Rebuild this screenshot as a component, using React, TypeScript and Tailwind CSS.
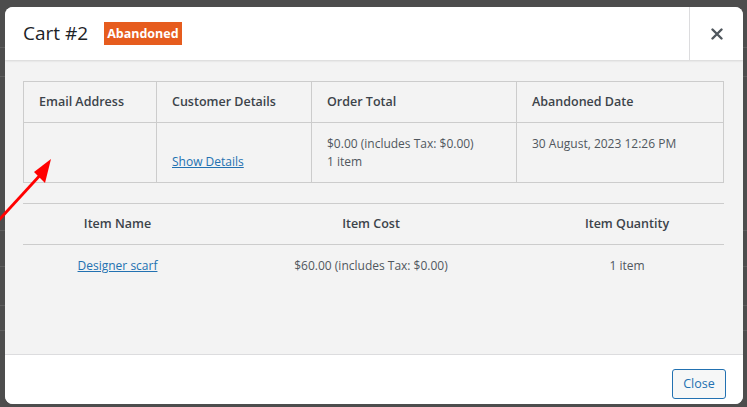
import React from "react";

export default function App() {
  const th = "text-left font-semibold text-[12.5px] text-[#3c434a] px-[15px] h-[41px] border border-[#cccccc]";
  const td = "align-top px-[15px] pt-[12px] pb-[10px] text-[12px] leading-[18px] text-[#50575e] border border-[#cccccc]";
  const th2 = "text-center font-semibold text-[12.5px] text-[#3c434a]";
  return (
    <div
      className="relative w-[747px] h-[407px] overflow-hidden bg-[#4d4d4d] pt-[7px] pl-[5px] pr-[4px] pb-[3px]"
      style={{ fontFamily: '"Open Sans", "Noto Sans", sans-serif' }}
    >
      {/* faint background page lines */}
      <div className="absolute left-0 top-[47px] w-full h-px bg-[#5e5e5e]" />
      <div className="absolute left-0 top-[76px] w-full h-px bg-[#5e5e5e]" />
      <div className="absolute left-0 top-[230px] w-full h-px bg-[#5e5e5e]" />
      <div className="absolute left-0 top-[266px] w-full h-px bg-[#5e5e5e]" />
      <div className="absolute left-0 top-[305px] w-full h-px bg-[#5e5e5e]" />
      <div className="absolute left-0 top-[330px] w-full h-px bg-[#5e5e5e]" />

      <div className="relative flex flex-col w-[738px] h-[397px] bg-white rounded-[8px] overflow-hidden">
        {/* header */}
        <div className="flex items-stretch h-[53px] shrink-0 shadow-[0_1px_2px_rgba(0,0,0,0.12)] z-10 bg-white">
          <div className="flex-1 flex items-center pl-[18px]">
            <span className="text-[19px] text-[#1d2327]">Cart #2</span>
            <span className="ml-[16px] bg-[#e65c1e] text-white font-bold text-[12.5px] leading-[23px] px-[3px]">
              Abandoned
            </span>
          </div>
          <div className="w-[54px] border-l border-[#dcdcde] flex items-center justify-center">
            <svg width="12" height="12" viewBox="0 0 12 12">
              <path d="M1.5 1.5 L10.5 10.5 M10.5 1.5 L1.5 10.5" stroke="#50575e" strokeWidth="2.4" strokeLinecap="round" />
            </svg>
          </div>
        </div>

        {/* body */}
        <div className="flex-1 bg-[#f3f3f3] pl-[18px] pr-[19px] pt-[21px]">
          <table className="w-[701px] border-collapse">
            <thead>
              <tr>
                <th className={th + " w-[133px]"}>Email Address</th>
                <th className={th + " w-[155px]"}>Customer Details</th>
                <th className={th + " w-[205px]"}>Order Total</th>
                <th className={th}>Abandoned Date</th>
              </tr>
            </thead>
            <tbody>
              <tr className="h-[60px]">
                <td className={td}></td>
                <td className={td}>
                  <div className="h-[18px]" />
                  <a className="text-[#2271b1] underline">Show Details</a>
                </td>
                <td className={td}>
                  <div>$0.00 (includes Tax: $0.00)</div>
                  <div>1 item</div>
                </td>
                <td className={td}>30 August, 2023 12:26 PM</td>
              </tr>
            </tbody>
          </table>

          <table className="w-[701px] border-collapse mt-[20px]">
            <thead>
              <tr className="h-[41px] border-t border-b border-[#cccccc]">
                <th className={th2 + " w-[189px]"}>Item Name</th>
                <th className={th2 + " w-[318px]"}>Item Cost</th>
                <th className={th2}>Item Quantity</th>
              </tr>
            </thead>
            <tbody>
              <tr className="h-[42px]">
                <td className="text-center text-[12px] text-[#2271b1]">
                  <a className="underline">Designer scarf</a>
                </td>
                <td className="text-center text-[12px] text-[#50575e]">$60.00 (includes Tax: $0.00)</td>
                <td className="text-center text-[12px] text-[#50575e]">1 item</td>
              </tr>
            </tbody>
          </table>
        </div>

        {/* footer */}
        <div className="h-[50px] shrink-0 border-t border-[#dcdcde] flex items-start justify-end pt-[14px] pr-[17px] bg-white">
          <button className="h-[30px] w-[54px] border border-[#2271b1] rounded-[3px] bg-[#f6f7f7] text-[#2271b1] text-[12.5px]">
            Close
          </button>
        </div>
      </div>

      {/* red arrow annotation */}
      <svg className="absolute left-0 top-0 pointer-events-none" width="747" height="407">
        <line x1="-2" y1="221" x2="43" y2="172" stroke="#ff0000" strokeWidth="2.8" />
        <polygon points="51,159 34,172 45,183" fill="#ff0000" />
      </svg>
    </div>
  );
}
